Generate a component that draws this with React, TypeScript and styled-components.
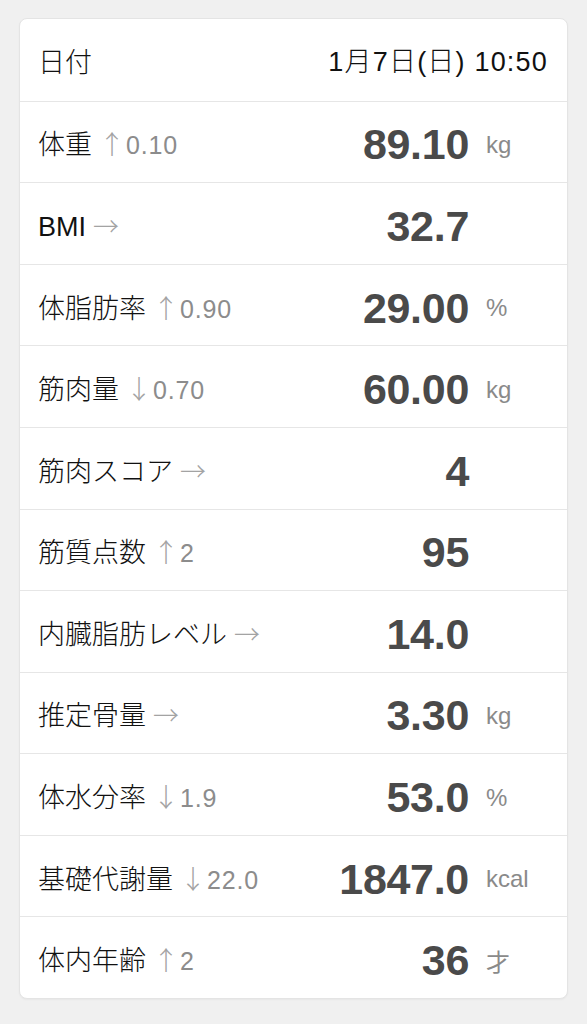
import React from 'react';
import styled, { createGlobalStyle } from 'styled-components';

type Trend = 'up' | 'down' | 'flat';

type Metric = {
  label: string;
  trend: Trend;
  delta?: string;
  value: string;
  unit?: string;
};

const metrics: Metric[] = [
  { label: '体重', trend: 'up', delta: '0.10', value: '89.10', unit: 'kg' },
  { label: 'BMI', trend: 'flat', value: '32.7' },
  { label: '体脂肪率', trend: 'up', delta: '0.90', value: '29.00', unit: '%' },
  { label: '筋肉量', trend: 'down', delta: '0.70', value: '60.00', unit: 'kg' },
  { label: '筋肉スコア', trend: 'flat', value: '4' },
  { label: '筋質点数', trend: 'up', delta: '2', value: '95' },
  { label: '内臓脂肪レベル', trend: 'flat', value: '14.0' },
  { label: '推定骨量', trend: 'flat', value: '3.30', unit: 'kg' },
  { label: '体水分率', trend: 'down', delta: '1.9', value: '53.0', unit: '%' },
  { label: '基礎代謝量', trend: 'down', delta: '22.0', value: '1847.0', unit: 'kcal' },
  { label: '体内年齢', trend: 'up', delta: '2', value: '36', unit: '才' },
];

const arrows: Record<Trend, string> = {
  up: '↑',
  down: '↓',
  flat: '→',
};

const App = () => {
  return (
    <>
      <GlobalStyle />
      <Page>
        <Card>
          <Row>
            <Label>日付</Label>
            <DateText>1月7日(日) 10:50</DateText>
          </Row>
          {metrics.map((m) => (
            <Row key={m.label}>
              <Label>
                {m.label}
                <Arrow $flat={m.trend === 'flat'}>{arrows[m.trend]}</Arrow>
                {m.delta && <Delta>{m.delta}</Delta>}
              </Label>
              <Value>{m.value}</Value>
              <Unit>{m.unit}</Unit>
            </Row>
          ))}
        </Card>
      </Page>
    </>
  );
};

export default App;

const GlobalStyle = createGlobalStyle`
  * {
    box-sizing: border-box;
  }
  body {
    margin: 0;
    background: #f0f0f0;
    font-family: 'Liberation Sans', 'Noto Sans CJK JP', sans-serif;
  }
`;

const Page = styled.div`
  width: 587px;
  height: 1024px;
  padding: 18px 19px 25px 19px;
  background: #f0f0f0;
`;

const Card = styled.div`
  height: 981px;
  background: #fff;
  border: 1px solid #e4e4e4;
  border-radius: 8px;
  box-shadow: 0 1px 2px rgb(0 0 0 / 4%);
  display: grid;
  grid-template-rows: repeat(12, 1fr);
  overflow: hidden;
`;

const Row = styled.div`
  display: grid;
  grid-template-columns: 1fr auto 98px;
  align-items: center;
  padding-left: 18px;
  & + & {
    border-top: 1px solid #e6e6e6;
  }
`;

const Label = styled.div`
  font-size: 27px;
  font-weight: 300;
  color: #111;
  white-space: nowrap;
  display: flex;
  align-items: baseline;
  padding-top: 2px;
`;

const Arrow = styled.span<{ $flat: boolean }>`
  font-family: 'Noto Sans CJK JP', sans-serif;
  font-weight: 300;
  font-size: 26px;
  color: #a3a3a3;
  margin-left: 7px;
`;

const Delta = styled.span`
  margin-left: 1px;
  font-size: 25px;
  font-weight: 400;
  letter-spacing: 0.8px;
  color: #8c8c8c;
`;

const DateText = styled.div`
  grid-column: 2 / 4;
  justify-self: end;
  padding-right: 19px;
  font-size: 27px;
  font-weight: 300;
  letter-spacing: 1.2px;
  color: #111;
`;

const Value = styled.div`
  font-size: 43px;
  font-weight: 700;
  color: #4a4a4a;
  text-align: right;
  padding-top: 6px;
  letter-spacing: -0.3px;
`;

const Unit = styled.div`
  padding-left: 17px;
  padding-top: 6px;
  font-size: 24px;
  color: #8a8a8a;
`;
